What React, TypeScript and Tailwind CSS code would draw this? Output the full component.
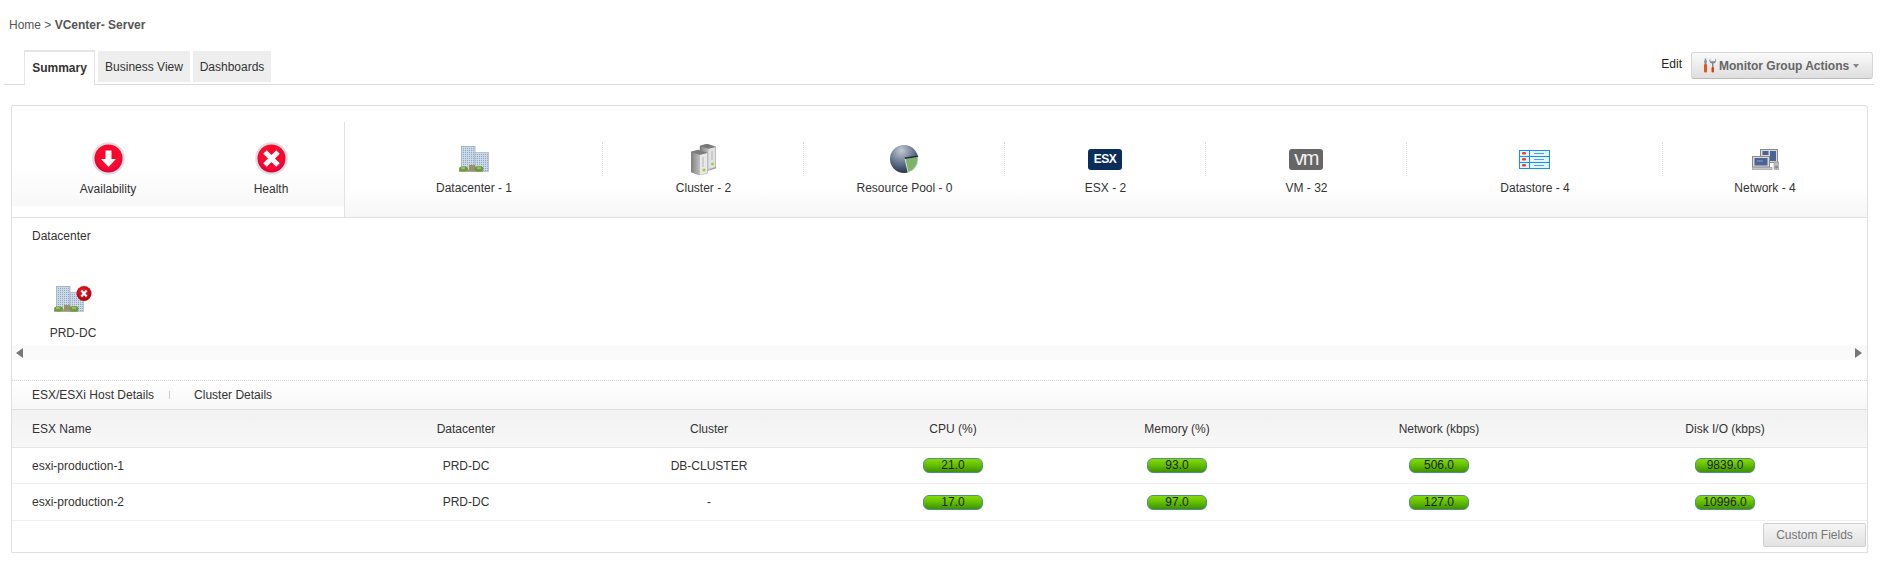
import React from "react";

function StatusCircle({ kind }: { kind: "down" | "x" }) {
  const id = "sc-" + kind;
  return (
    <svg width="33" height="33" viewBox="0 0 33 33">
      <defs>
        <radialGradient id={id} cx="50%" cy="42%" r="58%">
          <stop offset="0%" stopColor="#ff0022" />
          <stop offset="70%" stopColor="#fb0a30" />
          <stop offset="100%" stopColor="#d8003f" />
        </radialGradient>
      </defs>
      <circle cx="16.5" cy="16.5" r="16.3" fill="#dedede" />
      <circle cx="16.5" cy="16.5" r="14" fill={`url(#${id})`} />
      {kind === "down" ? (
        <path d="M13.5 8.5h6v8.5h4.5l-7.5 8-7.5-8h4.500z" fill="#fff" />
      ) : (
        <path d="M10 10l13 13M23 10L10 23" stroke="#fff" strokeWidth="5" />
      )}
    </svg>
  );
}

function Building({ id }: { id: string }) {
  return (
    <>
      <defs>
        <pattern id={id} width="2" height="2" patternUnits="userSpaceOnUse">
          <rect width="2" height="2" fill="#d5e0ec" />
          <rect width="1.2" height="1.2" fill="#8fa9c9" />
        </pattern>
      </defs>
      <rect x="2.400" y="0.400" width="13.600" height="23" fill={`url(#${id})`} stroke="#a0aebd" strokeWidth="0.8" />
      <rect x="16" y="6.400" width="13.500" height="19" fill={`url(#${id})`} stroke="#aebccb" strokeWidth="0.8" />
      <rect x="10" y="19" width="6" height="5.500" fill="#a08e68" />
      <rect x="0" y="24" width="24" height="1.800" fill="#8d9a78" />
      <ellipse cx="4.500" cy="22.800" rx="4.500" ry="2.600" fill="#6f9a3c" />
      <ellipse cx="20" cy="22.800" rx="4.500" ry="2.800" fill="#6f9a3c" />
      <ellipse cx="4" cy="22" rx="2.200" ry="1.200" fill="#9cc25f" />
      <ellipse cx="20" cy="22" rx="2.200" ry="1.200" fill="#9cc25f" />
    </>
  );
}

function DatacenterIcon() {
  return (
    <svg width="30" height="26" viewBox="0 0 30 26">
      <Building id="bldg-a" />
    </svg>
  );
}

function DatacenterErrorIcon() {
  return (
    <svg width="38" height="26" viewBox="0 0 38 26">
      <defs>
        <radialGradient id="err-r" cx="45%" cy="35%" r="65%">
          <stop offset="0%" stopColor="#ee1c25" />
          <stop offset="100%" stopColor="#b5000f" />
        </radialGradient>
      </defs>
      <Building id="bldg-b" />
      <circle cx="30" cy="7.500" r="7.500" fill="url(#err-r)" />
      <path d="M27.300 4.500l5.400 6M32.700 4.500l-5.400 6" stroke="#fff" strokeWidth="2.200" />
    </svg>
  );
}

function ClusterIcon() {
  return (
    <svg width="25" height="31" viewBox="0 0 25 31">
      <defs>
        <linearGradient id="srv" x1="0" x2="1" y1="0" y2="0">
          <stop offset="0%" stopColor="#7f7f7f" />
          <stop offset="55%" stopColor="#c2c2c2" />
          <stop offset="100%" stopColor="#9c9c9c" />
        </linearGradient>
      </defs>
      <path d="M9 2l7-2 9 3v21l-8 2.500-8-2.500z" fill="url(#srv)" stroke="#7d7d7d" strokeWidth="0.5" />
      <path d="M17.500 4.500l7-1.500V23l-7 2z" fill="#e2e2e2" />
      <path d="M9 2l7-2 8.500 3-7 1.800z" fill="#777777" />
      <path d="M0 8l7-2 9.500 3v20l-8 2L0 28z" fill="url(#srv)" stroke="#7d7d7d" strokeWidth="0.5" />
      <path d="M0 8l7-2 9.500 3-7.500 2z" fill="#7b7b7b" />
      <path d="M9 11l7.500-2v20l-7.500 2z" fill="#e8e8e8" />
      <path d="M12 13v10M21 7v9" stroke="#b4b4b4" strokeWidth="1" />
      <circle cx="13" cy="26" r="1.600" fill="#97d13b" />
      <circle cx="21.500" cy="20" r="1.400" fill="#97d13b" />
    </svg>
  );
}

function PoolIcon() {
  return (
    <svg width="28" height="28" viewBox="0 0 28 28">
      <defs>
        <radialGradient id="pool" cx="40%" cy="20%" r="85%">
          <stop offset="0%" stopColor="#c2c8d0" />
          <stop offset="50%" stopColor="#6c7b93" />
          <stop offset="100%" stopColor="#1f2c46" />
        </radialGradient>
      </defs>
      <circle cx="14" cy="14" r="14" fill="url(#pool)" />
      <path d="M15 13.500L28 11.500v3a14 14 0 0 1-10 13z" fill="#7fb36a" stroke="#fff" strokeWidth="0.700" />
      <path d="M14.500 12.500L28 10.500v1.500l-13 2z" fill="#1f2a3e" />
    </svg>
  );
}

function DatastoreIcon() {
  const rows = [0, 6, 12];
  return (
    <svg width="31" height="19" viewBox="0 0 31 19">
      <rect x="0.500" y="0.500" width="30" height="18" fill="#e6f3fd" stroke="#1b8ff0" />
      <path d="M0.500 6.500h30M0.500 12.500h30M10.500 0.500v18" stroke="#1b8ff0" fill="none" />
      {rows.map((y) => (
        <g key={y}>
          <rect x="3" y={y + 2} width="4" height="2.600" rx="1" fill="#f0441c" />
          <path d={`M15 ${y + 3.500}h10`} stroke="#4aa3e8" strokeWidth="1" />
        </g>
      ))}
    </svg>
  );
}

function NetworkIcon() {
  return (
    <svg width="27" height="21" viewBox="0 0 27 21">
      <rect x="8.500" y="0.500" width="17" height="13" fill="#d8d8d8" stroke="#8a8a8a" />
      <rect x="10.500" y="2" width="6" height="4" fill="#4a6496" />
      <rect x="18" y="2" width="6" height="10" fill="#4a6496" />
      <rect x="22" y="13" width="5" height="7.500" fill="#bcbcbc" stroke="#8a8a8a" strokeWidth="0.500" />
      <circle cx="24.500" cy="18" r="1.500" fill="#888888" />
      <rect x="0.500" y="7.500" width="17" height="10.500" fill="#d8d8d8" stroke="#8a8a8a" />
      <rect x="2.500" y="9" width="13" height="7.500" fill="#4a6496" />
      <path d="M5 12h6" stroke="#8aa0c8" strokeWidth="1" />
      <rect x="0" y="18.500" width="20" height="2.500" fill="#c4c4c4" stroke="#8a8a8a" strokeWidth="0.500" />
    </svg>
  );
}

function ToolsIcon() {
  return (
    <svg width="13" height="15" viewBox="0 0 13 15">
      <path d="M2.500 0.500v3" stroke="#8a949e" strokeWidth="1.500" />
      <path d="M1 2.500h3L3.500 6h-2z" fill="#8a949e" />
      <rect x="1" y="6" width="3" height="8.500" rx="1" fill="#e2571b" />
      <path d="M7.300 0.500a3 3 0 0 0 1.700 5.100V9h1.500V5.600A3 3 0 0 0 12.200 0.500v2.800H7.300z" fill="#7f8a95" />
      <rect x="8.500" y="9" width="2.500" height="5.500" rx="1" fill="#d8401a" />
    </svg>
  );
}

function Pill({ value }: { value: string }) {
  return (
    <div className="flex h-[15px] w-[60px] items-center justify-center rounded-[6px] border border-[#4f8f8f] bg-[linear-gradient(to_bottom,#86dd00_0%,#66c000_45%,#3d9300_100%)] text-[12px] leading-[13px] text-[#1c1c1c]">
      {value}
    </div>
  );
}

const summaryCells: { width: string; label: string; icon: React.ReactNode; last?: boolean }[] = [
  { width: "w-[258px]", label: "Datacenter - 1", icon: <DatacenterIcon /> },
  { width: "w-[201px]", label: "Cluster - 2", icon: <ClusterIcon /> },
  { width: "w-[201px]", label: "Resource Pool - 0", icon: <PoolIcon /> },
  {
    width: "w-[201px]",
    label: "ESX - 2",
    icon: (
      <div className="flex h-[21px] w-[34px] items-center justify-center rounded-[3px] bg-[#0b2d5a] text-[12px] font-bold tracking-[-0.5px] text-white">
        ESX
      </div>
    ),
  },
  {
    width: "w-[201px]",
    label: "VM - 32",
    icon: (
      <div className="flex h-[21px] w-[34px] items-center justify-center rounded-[3px] bg-[#666666] pb-[3px] text-[20px] tracking-[-1.5px] text-[#f2f2f2]">
        vm
      </div>
    ),
  },
  { width: "w-[256px]", label: "Datastore - 4", icon: <DatastoreIcon /> },
  { width: "flex-1", label: "Network - 4", icon: <NetworkIcon />, last: true },
];

const gridCols = "grid grid-cols-[332px_244px_242px_246px_202px_322px_250px_1fr] items-center";

const rows = [
  { name: "esxi-production-1", dc: "PRD-DC", cluster: "DB-CLUSTER", cpu: "21.0", mem: "93.0", net: "506.0", disk: "9839.0", h: "h-[36px]" },
  { name: "esxi-production-2", dc: "PRD-DC", cluster: "-", cpu: "17.0", mem: "97.0", net: "127.0", disk: "10996.0", h: "h-[37px]" },
];

export default function App() {
  return (
    <div className="min-h-[570px] w-[1881px] overflow-hidden bg-white font-['Liberation_Sans',Arial,sans-serif] text-[12px] leading-[14px] text-[#333333]">
      <div className="h-[50px] pl-[9px] pt-[18px] text-[#555555]">
        Home &gt; <span className="font-bold">VCenter- Server</span>
      </div>

      <div className="ml-[4px] flex h-[35px] w-[1870px] items-start border-b border-[#dddddd]">
        <div className="ml-[20px] -mb-px flex h-[35px] w-[71px] items-center justify-center border-x border-t-2 border-[#e4e4e4] bg-white pb-[2px] font-bold">
          Summary
        </div>
        <div className="ml-[3px] mt-[1px] flex h-[31px] w-[92px] items-center justify-center bg-[#eeeeee]">Business View</div>
        <div className="ml-[3px] mt-[1px] flex h-[31px] w-[78px] items-center justify-center bg-[#eeeeee]">Dashboards</div>
        <div className="ml-auto mt-[7px] text-[#222222]">Edit</div>
        <div className="ml-[9px] mr-[1px] mt-[2px] flex h-[27px] w-[182px] items-center rounded-[3px] border border-[#d6d6d6] border-b-[#bbbbbb] bg-[linear-gradient(to_bottom,#fafafa,#dedede)] pl-[11px] font-bold text-[#666666]">
          <ToolsIcon />
          <span className="ml-[3px]">Monitor Group Actions</span>
          <span className="ml-[4px] mt-[1px] h-0 w-0 border-x-[3.5px] border-t-[4px] border-x-transparent border-t-[#888888]" />
        </div>
      </div>

      <div className="ml-[11px] mt-[20px] w-[1857px] rounded-tr-[3px] border border-[#e0e0e0]">
        <div className="flex h-[112px] border-b border-[#e2e2e2] pt-[16px]">
          <div className="flex h-[84px] w-[332px] bg-[linear-gradient(to_bottom,#ffffff_50%,#f8f8f8_100%)] pt-[20px]">
            <div className="flex w-[192px] flex-col items-center">
              <StatusCircle kind="down" />
              <div className="mt-[7px]">Availability</div>
            </div>
            <div className="flex w-[134px] flex-col items-center">
              <StatusCircle kind="x" />
              <div className="mt-[7px]">Health</div>
            </div>
          </div>
          <div className="flex flex-1 border-l border-[#e2e2e2] bg-[linear-gradient(to_bottom,#ffffff_70%,#f6f6f6_100%)] pt-[20px]">
            {summaryCells.map((c) => (
              <div key={c.label} className={c.width}>
                <div
                  className={
                    c.last
                      ? "flex h-[34px] items-center justify-center"
                      : "flex h-[34px] items-center justify-center border-r border-dotted border-[#dddddd]"
                  }
                >
                  {c.icon}
                </div>
                <div className="mt-[5px] text-center">{c.label}</div>
              </div>
            ))}
          </div>
        </div>

        <div className="pt-[11px]">
          <div className="pl-[20px]">Datacenter</div>
          <div className="ml-[38px] mt-[43px] flex w-[46px] flex-col items-center">
            <DatacenterErrorIcon />
            <div className="mt-[14px] whitespace-nowrap">PRD-DC</div>
          </div>
          <div className="mt-[5px] flex h-[15px] items-center justify-between bg-[#fafafa] px-[4px]">
            <span className="h-0 w-0 border-y-[5px] border-r-[7px] border-y-transparent border-r-[#777777]" />
            <span className="mr-[1px] h-0 w-0 border-y-[5px] border-l-[7px] border-y-transparent border-l-[#777777]" />
          </div>
        </div>

        <div className="mt-[20px] border-t border-dotted border-[#d8d8d8]">
          <div className="flex h-[29px] items-center border-b border-[#e0e0e0] bg-[linear-gradient(to_bottom,#ffffff,#f7f7f7)] pl-[20px]">
            <span>ESX/ESXi Host Details</span>
            <span className="ml-[15px] h-[8px] w-px bg-[#cccccc]" />
            <span className="ml-[24px]">Cluster Details</span>
          </div>
        </div>

        <div className={`${gridCols} h-[38px] border-b border-[#e6e6e6] bg-[linear-gradient(to_bottom,#f2f2f2,#f7f7f7)]`}>
          <div className="pl-[20px]">ESX Name</div>
          <div className="text-center">Datacenter</div>
          <div className="text-center">Cluster</div>
          <div className="text-center">CPU (%)</div>
          <div className="text-center">Memory (%)</div>
          <div className="text-center">Network (kbps)</div>
          <div className="text-center">Disk I/O (kbps)</div>
        </div>

        {rows.map((r) => (
          <div key={r.name} className={`${gridCols} ${r.h} border-b border-[#f0f0f0]`}>
            <div className="pl-[20px]">{r.name}</div>
            <div className="text-center">{r.dc}</div>
            <div className="text-center">{r.cluster}</div>
            <div className="flex justify-center"><Pill value={r.cpu} /></div>
            <div className="flex justify-center"><Pill value={r.mem} /></div>
            <div className="flex justify-center"><Pill value={r.net} /></div>
            <div className="flex justify-center"><Pill value={r.disk} /></div>
          </div>
        ))}

        <div className="flex h-[31px] justify-end pr-[1px] pt-[2px]">
          <div className="flex h-[24px] w-[103px] items-center justify-center rounded-[2px] border border-[#d0d0d0] bg-[linear-gradient(to_bottom,#f6f6f6,#e2e2e2)] text-[#777777]">
            Custom Fields
          </div>
        </div>
      </div>
    </div>
  );
}
